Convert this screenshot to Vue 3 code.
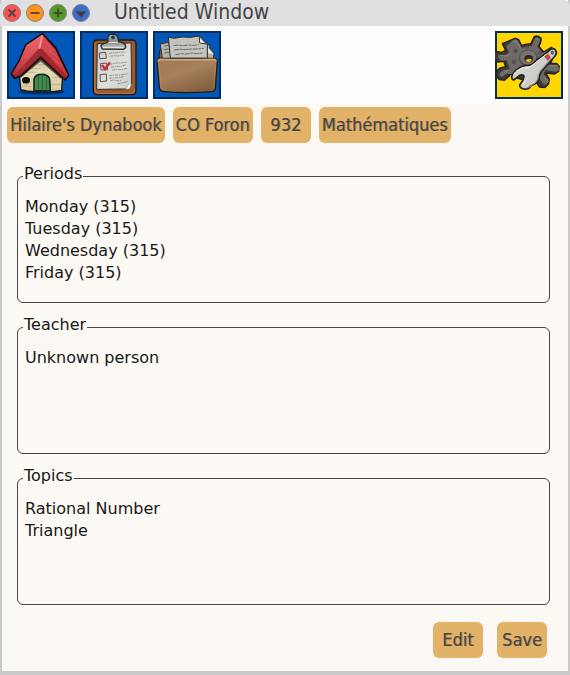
<script setup>
const crumbs = ["Hilaire's Dynabook", 'CO Foron', '932', 'Mathématiques']
const groups = [
  { title: 'Periods', items: ['Monday (315)', 'Tuesday (315)', 'Wednesday (315)', 'Friday (315)'] },
  { title: 'Teacher', items: ['Unknown person'] },
  { title: 'Topics', items: ['Rational Number', 'Triangle'] }
]
</script>

<template>
  <main class="window">
    <header class="titlebar">
      <div class="controls">
        <button class="control close" aria-label="Close">
          <svg viewBox="0 0 18 18"><path d="M5 5l8 8M13 5l-8 8" /></svg>
        </button>
        <button class="control minimize" aria-label="Minimize">
          <svg viewBox="0 0 18 18"><path d="M4 9h10" /></svg>
        </button>
        <button class="control maximize" aria-label="Maximize">
          <svg viewBox="0 0 18 18"><path d="M4 9h10M9 4v10" /></svg>
        </button>
        <button class="control menu" aria-label="Menu">
          <svg viewBox="0 0 18 18"><path class="solid" d="M5 8h8l-4 5z" /></svg>
        </button>
      </div>
      <h1>Untitled Window</h1>
    </header>

    <nav class="toolbar">
      <button class="tool" aria-label="Home">
        <svg viewBox="21 21 204 204">
          <defs>
            <linearGradient id="roofLeft" x1="0.7" y1="0" x2="0.4" y2="1">
              <stop offset="0" stop-color="#e9666a" /><stop offset="0.6" stop-color="#d64a50" /><stop offset="1" stop-color="#b5343a" />
            </linearGradient>
            <linearGradient id="roofRight" x1="0" y1="0" x2="1" y2="1">
              <stop offset="0" stop-color="#dc4f56" /><stop offset="1" stop-color="#c2353c" />
            </linearGradient>
            <linearGradient id="wall" x1="0" y1="0" x2="0" y2="1">
              <stop offset="0" stop-color="#c7b68c" /><stop offset="0.4" stop-color="#e6dcb9" /><stop offset="1" stop-color="#d8c9a0" />
            </linearGradient>
          </defs>
          <ellipse cx="126" cy="204" rx="68" ry="8" fill="#003477" />
          <path d="M58 148L122 98l66 55-3 46q-30 7-60 3-38 3-63-5z" fill="url(#wall)" stroke="#15120e" stroke-width="4" stroke-linejoin="round" />
          <path d="M80 145h29M112 122h27M94 134h29M150 139h25M66 187h30M155 181h29M158 160h24" fill="none" stroke="#b7a57b" stroke-width="2" />
          <path d="M60 153L122 100l64 57-2 9-62-54-60 49z" fill="#2d231a" opacity="0.75" />
          <path d="M102 200v-35q4-14 22-14 22 0 25 15l2 35z" fill="#49884d" stroke="#142c1b" stroke-width="5" />
          <path d="M115 155v44M127 154v46M139 158v41" stroke="#27633b" stroke-width="3" />
          <ellipse cx="78" cy="169" rx="12" ry="10" fill="#0d0c0a" />
          <path d="M68 178q13 7 25-4" fill="none" stroke="#a79569" stroke-width="3" />
          <path d="M127 29L77 63l-20 48-23 38 10 14 20-8 58-54 73 67 11-14-15-33-24-50z" fill="#7f1f23" stroke="#1c0b0a" stroke-width="5" stroke-linejoin="round" />
          <path d="M126 32L79 64l-20 48-23 37 10 3 72-75z" fill="url(#roofLeft)" />
          <path d="M127 32l39 45 23 49 15 27-8 9-73-74-6-16z" fill="url(#roofRight)" />
          <path d="M37 149l10 2 70-78 7 19-61 58-17 9z" fill="#a12c31" />
          <path d="M117 73l9 1 74 81-6 7-72-68z" fill="#a5262d" />
          <path d="M118 74l9-40" fill="none" stroke="#f5a3a0" stroke-width="5" />
          <path d="M78 69l28-13M71 86l29-10M65 103l24-7M136 55l23 24M145 77l31 27M160 103l29 24" stroke="#ee8784" stroke-width="3" opacity="0.35" />
        </svg>
      </button>
      <button class="tool" aria-label="Tasks">
        <svg viewBox="12 15 204 204">
          <defs>
            <linearGradient id="paper" x1="0" y1="0" x2="1" y2="1">
              <stop offset="0" stop-color="#cfcfca" /><stop offset="0.6" stop-color="#dededb" /><stop offset="1" stop-color="#c9c9c5" />
            </linearGradient>
            <linearGradient id="clip" x1="0" y1="0" x2="0" y2="1">
              <stop offset="0" stop-color="#bcbcbc" /><stop offset="0.5" stop-color="#898989" /><stop offset="1" stop-color="#cecece" />
            </linearGradient>
          </defs>
          <rect x="52" y="42" width="128" height="164" rx="11" fill="#995a30" stroke="#28140a" stroke-width="4" />
          <path d="M57 52v138q0 11 11 12h96q11-1 12-13" fill="none" stroke="#bd7a45" stroke-width="3" />
          <path d="M64 53l101-2 2 123-17 15-88 1z" fill="url(#paper)" stroke="#39322c" stroke-width="3" />
          <path d="M167 174l-7 14-12 2q8-5 7-14z" fill="#f7f7f5" stroke="#8d8b85" />
          <path d="M70 81l19-2 2 18-20 1zM73 113l19-2 3 20-20 1zM72 146l19-2 1 21-19 2z" fill="none" stroke="#59554e" stroke-width="3" />
          <path d="M99 82l14-2 5 1 14-3 16 1M103 91l12-2 11 1 11-3 7 1M101 116l14-5 18 0 22-3M105 124l17-3 14 0 13-4M109 132l10-2 17 1 17-4M99 149l15-2 17 0 24-4M99 157l20-2 13 0 13-4M103 164l10-2 13 3 12-3M125 173l16-3 15-4" fill="none" stroke="#6d6962" stroke-width="2" stroke-dasharray="9 2 5 2" />
          <path d="M78 117l9 12 15-20" fill="none" stroke="#cb2734" stroke-width="7" />
          <path d="M96 47l-1-10q2-12 14-13 15 0 17 13l2 10q12 2 20 8l1 10-6 5-64-1-4-9q1-6 10-8 8-1 11-5z" fill="url(#clip)" stroke="#292929" stroke-width="4" stroke-linejoin="round" />
          <circle cx="111" cy="34" r="5" fill="#063e82" stroke="#3a3a3a" stroke-width="2" />
          <path d="M98 49h27M80 64h62" stroke="#e9e9e9" stroke-width="3" />
        </svg>
      </button>
      <button class="tool" aria-label="Documents">
        <svg viewBox="15 15 204 204">
          <defs>
            <linearGradient id="folder" x1="0" y1="0" x2="0.6" y2="1">
              <stop offset="0" stop-color="#9f7b58" /><stop offset="0.5" stop-color="#a67f5c" /><stop offset="1" stop-color="#846141" />
            </linearGradient>
          </defs>
          <path d="M33 99l2-26 14-3 6 6 134 6 10 18z" fill="#855a39" stroke="#2d1b11" stroke-width="3" />
          <path d="M43 98l-6-44 25-5 8 49zM170 55l15 2 1 13 12 12-2 16h-27z" fill="#b5b5b0" stroke="#363632" stroke-width="3" />
          <path d="M48 61l12-3M48 71l14-2M49 81l14-2" stroke="#676762" stroke-width="3" />
          <path d="M67 97l-6-64 16 4 25-4 25 1 27-4 24 24v43z" fill="#c4c4be" stroke="#292925" stroke-width="3" stroke-linejoin="round" />
          <path d="M154 31l1 20 20 3z" fill="#f6f6f3" stroke="#32322e" stroke-width="3" />
          <path d="M180 66q7 4 15 18l-14-2z" fill="#efefea" />
          <path d="M77 59l13-2 14 2 16-2 20 1 12-2M78 72l19-2 15 1 17-2 22 0 16-2M82 86l17-3 14 1 18-3 14 2 21-2" fill="none" stroke="#6a6a64" stroke-width="3" stroke-dasharray="15 2 9 2" />
          <path d="M27 105q1-7 8-8 81 1 163 0 9 0 10 8l-6 84q-1 7-11 8-82 6-142 0-13-1-15-12z" fill="url(#folder)" stroke="#28170d" stroke-width="4" />
          <path d="M30 107q1-7 8-7 82 2 158 0 8 0 8 6" fill="none" stroke="#d1a77e" stroke-width="5" />
          <path d="M33 115l6 66q2 9 12 10M202 118l-5 68" fill="none" stroke="#c49069" stroke-width="2" opacity="0.7" />
        </svg>
      </button>
      <button class="tool settings" aria-label="Settings">
        <svg viewBox="0 0 204 204">
          <defs>
            <linearGradient id="wrench" x1="0" y1="0" x2="1" y2="1">
              <stop offset="0" stop-color="#ddddd8" /><stop offset="1" stop-color="#c3c4bd" />
            </linearGradient>
          </defs>
          <path d="M51 26q11-8 20 0l9 18q14-7 27-5l10-21q8-7 21 3 2 10-6 25l14 17 23-14 14 12-16 36 18 0 8 9-2 15-12 8-26-3 10 18-2 14-12 12-16-2-12-19-18 2-35-9-20-14-5 7-15 13-15-2-10-11 1-14 11-10 17-4-6-16-18 2-12-11-2-17 9-4 16 3 13-6-10-20z" fill="#3d3937" stroke="#24211f" stroke-width="4" stroke-linejoin="round" />
          <path d="M54 27q9-6 15 2l12 23q14-8 29-7l10-23q8-6 15 2 0 8-8 23l16 19 24-12-12 39 3 10 27-1 8 8-2 9-9 3-30-5-7 12 15 17-2 10-10 6-16-20-80-12-18-2-13 10-8-4 1-7 10-9 20-3-9-27-18 1-8-12 1-6 13 3 19-8-8-20z" fill="#6d6966" />
          <path d="M57 31q6-3 9 2l10 19M16 73l18 2 16-9M122 25q6-3 9 2M163 105l25-1M148 138l13 15M27 125l14-9" fill="none" stroke="#8b8784" stroke-width="3" />
          <ellipse cx="101" cy="83" rx="28" ry="25" fill="#4d4947" />
          <ellipse cx="100" cy="80" rx="26" ry="23" fill="#76726f" stroke="#494542" stroke-width="2" />
          <ellipse cx="101" cy="83" rx="13" ry="11" fill="#2d2925" />
          <path d="M91 88q10-9 20-1-2 6-9 7-7 0-11-6z" fill="#e7be0d" />
          <g fill="#5b5754" stroke="#4b4744" stroke-width="2"><circle cx="62" cy="60" r="5" /><circle cx="57" cy="93" r="5" /><circle cx="135" cy="65" r="5" /><circle cx="97" cy="48" r="4" /></g>
          <path d="M123 89l35-26 10-9q9-4 14 4 5 9-2 17l-42 48q-5 9-6 22-8 14-25 20-6 11-20 9-13-2-13-12l10-14 3-13q-5-5-13-2l-18 14q-6-2-6-10 3-12 16-22 11-10 26-12 17 3 31-14z" fill="url(#wrench)" stroke="#24221f" stroke-width="5" stroke-linejoin="round" />
          <path d="M55 131q13-20 36-20 13 0 23-10l41-32M83 161l13-18" fill="none" stroke="#f3f3f0" stroke-width="3" />
          <path d="M93 172q28-11 34-26 1-15 10-29l31-35" fill="none" stroke="#94958d" stroke-width="3" />
          <path d="M147 77l11-9q8 4 9 12l-9 10q-4-9-11-13z" fill="#be4b4a" />
          <ellipse cx="172" cy="65" rx="4" ry="5" fill="#77736b" stroke="#35332f" stroke-width="2" />
        </svg>
      </button>
    </nav>

    <nav class="crumbs" aria-label="Breadcrumb">
      <button v-for="crumb in crumbs" :key="crumb" class="pill">{{ crumb }}</button>
    </nav>

    <section class="groups">
      <fieldset v-for="group in groups" :key="group.title">
        <legend>{{ group.title }}</legend>
        <ul>
          <li v-for="item in group.items" :key="item">{{ item }}</li>
        </ul>
      </fieldset>
    </section>

    <footer class="actions">
      <button class="pill">Edit</button>
      <button class="pill">Save</button>
    </footer>
  </main>
</template>

<style>
body {
  background: #cacaca;
}
</style>

<style scoped>
.window {
  display: flex;
  flex-direction: column;
  box-sizing: border-box;
  min-height: 100vh;
  border: solid #cacaca;
  border-width: 0 2px 4px;
  background: #fcf8f3;
  color: #181818;
  font: 16px/22px "DejaVu Sans", sans-serif;
}

button {
  padding: 0;
  border: 0;
  font: inherit;
}

.titlebar {
  display: flex;
  align-items: center;
  gap: 24px;
  height: 26px;
  margin: 0 -2px;
  padding-left: 3px;
  border-radius: 6px 6px 0 0;
  background: #e0e0e0;
}

.controls {
  display: flex;
  gap: 5px;
}

.control {
  width: 18px;
  height: 18px;
  border: 1px solid #858585;
  border-radius: 50%;
}

.control svg {
  display: block;
  width: 16px;
  height: 16px;
  fill: none;
  stroke: #444;
  stroke-width: 2;
}

.control .solid {
  fill: #333;
}

.close { background: #ff5151; }
.minimize { background: #ff921c; }
.maximize { background: #549b24; }
.menu { background: #396fca; }

h1 {
  margin: 0;
  padding-bottom: 2px;
  color: #444;
  font: 21px/24px "DejaVu Sans Condensed", "DejaVu Sans", sans-serif;
}

.toolbar {
  display: flex;
  gap: 5px;
  padding: 5px;
  background: #fdfdfd;
}

.tool {
  box-sizing: border-box;
  width: 68px;
  height: 68px;
  background: #0057b7;
  box-shadow: inset 0 0 0 2px #002e65;
}

.tool svg {
  display: block;
  width: 68px;
  height: 68px;
}

.settings {
  margin-left: auto;
  background: #ffd600;
}

.crumbs {
  display: flex;
  gap: 8px;
  padding: 3px 5px;
}

.pill {
  min-width: 50px;
  height: 36px;
  padding: 0 3px;
  border-radius: 6px;
  background: #e2b269;
  color: #444;
  font: 18px/36px "DejaVu Sans Condensed", "DejaVu Sans", sans-serif;
  text-shadow: 1px 0 0 #44444466;
  white-space: nowrap;
}

.groups {
  display: grid;
  flex: 1;
  grid-auto-rows: 1fr;
  gap: 11px;
  padding: 17px 18px 17px 15px;
}

fieldset {
  box-sizing: border-box;
  min-width: 0;
  margin: 0;
  padding: 7px 7px 8px;
  border: 1px solid #484444;
  border-radius: 6px;
}

legend {
  margin-left: -2px;
  padding: 0 1px 4px;
}

ul {
  margin: 0;
  padding: 0;
  list-style: none;
}

.actions {
  display: flex;
  justify-content: flex-end;
  gap: 14px;
  padding: 0 21px 13px;
}
</style>
